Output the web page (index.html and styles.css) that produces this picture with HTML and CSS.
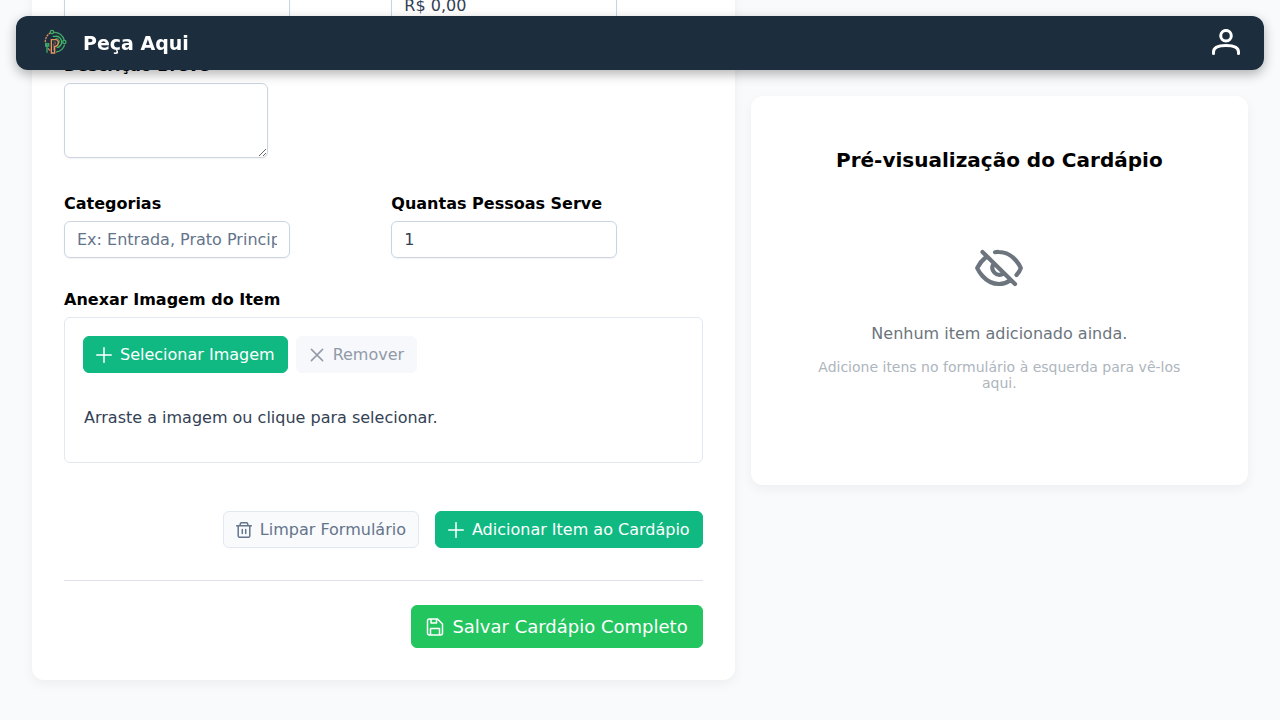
FILE: index.html
```html
<!DOCTYPE html>
<html lang="pt-BR">
<head>
<meta charset="utf-8">
<meta name="viewport" content="width=device-width, initial-scale=1">
<title>Peça Aqui</title>
<link rel="stylesheet" href="styles.css">
</head>
<body>
<header class="topbar">
  <a class="brand" href="#">
    <svg class="brand-logo" viewBox="12 15 96 96" fill="none" aria-hidden="true">
      <path d="M54 31A31 31 0 0 1 85 55M86 68A31 31 0 0 1 60 90" stroke="#45a56a" stroke-width="4"/>
      <path d="M44 32A31 31 0 0 0 28 62" stroke="#d98e5c" stroke-width="4" stroke-dasharray="7 2"/>
      <path d="M36 79L42 86" stroke="#d98e5c" stroke-width="4"/>
      <circle cx="48" cy="30" r="5" stroke="#3fae62" stroke-width="4"/>
      <circle cx="85" cy="60" r="5" stroke="#3fae62" stroke-width="4"/>
      <path d="M50 43H58A17 17 0 0 1 62 77" stroke="#43b665" stroke-width="4"/>
      <path d="M58 50A9 9 0 0 1 65 67" stroke="#2f9f5c" stroke-width="3"/>
      <path d="M29 63V72H38V63M33 62V92" stroke="#43a86b" stroke-width="4"/>
      <path d="M46 93V53H59Q67 53 67 62T58 73H56V93Z" stroke="#e8965a" stroke-width="4"/>
      <path d="M52 60H59V66H52V86" stroke="#b86f49" stroke-width="2"/>
    </svg>
    <span>Peça Aqui</span>
  </a>
  <button class="user-button" type="button" aria-label="Conta">
    <svg viewBox="0 0 28 28" fill="none" stroke="currentColor" stroke-width="3" stroke-linecap="round">
      <circle cx="14" cy="6.700" r="5.300"/>
      <path d="M1.500 24.500V23C1.500 18 7 16.500 14 16.500S26.500 18 26.500 23V24.500"/>
    </svg>
  </button>
</header>

<main class="page">
  <div class="column">
    <form class="card form-card">
      <div class="field-grid">
        <div class="field">
          <input class="text-input" type="text" aria-label="Nome do Item">
        </div>
        <div class="field">
          <input class="text-input" type="text" aria-label="Preço" value="R$ 0,00">
        </div>
      </div>
      <div class="field field-textarea">
        <label for="descricao">Descrição Breve</label>
        <textarea class="text-input" id="descricao"></textarea>
      </div>
      <div class="field-grid">
        <div class="field">
          <label for="categorias">Categorias</label>
          <input class="text-input" id="categorias" type="text" placeholder="Ex: Entrada, Prato Principal">
        </div>
        <div class="field">
          <label for="pessoas">Quantas Pessoas Serve</label>
          <input class="text-input" id="pessoas" type="text" value="1">
        </div>
      </div>
      <div class="field">
        <span class="field-title">Anexar Imagem do Item</span>
        <div class="upload">
          <div class="upload-buttons">
            <button class="button primary" type="button">
              <svg class="icon" viewBox="0 0 16 16" aria-hidden="true"><path d="M8 .7V15.300M.7 8H15.300"/></svg>
              Selecionar Imagem
            </button>
            <button class="button muted" type="button" disabled>
              <svg class="icon" viewBox="0 0 16 16" aria-hidden="true"><path d="M2.400 2.400L13.600 13.600M13.600 2.400L2.400 13.600"/></svg>
              Remover
            </button>
          </div>
          <p class="upload-hint">Arraste a imagem ou clique para selecionar.</p>
        </div>
      </div>
      <div class="actions">
        <button class="button outline" type="reset">
          <svg class="icon" viewBox="0 0 16 16" aria-hidden="true"><path d="M.7 3.800H15.300M2.200 3.800V13.700Q2.200 15.300 3.800 15.300H12.200Q13.800 15.300 13.800 13.700V3.800M4.200 3.800V2.300Q4.200 .7 5.800 .7H10.200Q11.800 .7 11.800 2.300V3.800M6.300 7.600V11.600M9.700 7.600V11.600"/></svg>
          Limpar Formulário
        </button>
        <button class="button primary" type="button">
          <svg class="icon" viewBox="0 0 16 16" aria-hidden="true"><path d="M8 .7V15.300M.7 8H15.300"/></svg>
          Adicionar Item ao Cardápio
        </button>
      </div>
      <div class="save-bar">
        <button class="button save" type="submit">
          <svg class="icon" viewBox="0 0 18 18" aria-hidden="true"><path d="M3 1H11.500L16.500 6V15Q16.500 17 14.500 17H3.500Q1.500 17 1.500 15V3Q1.500 1 3.500 1ZM5 1.300V5H10.500V1.300M4.500 16.700V10.500H13.500V16.700"/></svg>
          Salvar Cardápio Completo
        </button>
      </div>
    </form>
  </div>

  <aside class="column">
    <section class="card preview">
      <h2>Pré-visualização do Cardápio</h2>
      <div class="empty">
        <svg class="empty-icon" viewBox="0 0 48 48" fill="none" stroke="currentColor" stroke-width="4.200" stroke-linecap="round" stroke-linejoin="round" aria-hidden="true">
          <path d="M7.500 8L40 40M11 13C5.500 17.500 2.200 24 2.200 24S9 40 24 40Q30 40 35 36.500M20 8.200Q22 7.800 24 8C39 8 45.800 24 45.800 24Q44.500 27.800 41.500 31M18.200 20.500A7 7 0 0 0 27.500 30"/>
        </svg>
        <p class="empty-title">Nenhum item adicionado ainda.</p>
        <p class="empty-text">Adicione itens no formulário à esquerda para vê-los aqui.</p>
      </div>
    </section>
  </aside>
</main>
</body>
</html>
```
FILE: styles.css
```css
* {
  box-sizing: border-box;
}

body {
  margin: 0;
  overflow-x: hidden;
  background: #f8fafc;
  color: #000;
  font-family: "DejaVu Sans", sans-serif;
  font-size: 16px;
  line-height: 19px;
}

p,
h2 {
  margin: 0;
}

button,
input,
textarea {
  font: inherit;
}

.topbar {
  position: fixed;
  top: 16px;
  left: 16px;
  right: 16px;
  z-index: 10;
  display: flex;
  align-items: center;
  justify-content: space-between;
  height: 54px;
  padding: 0 24px;
  border-radius: 12px;
  background: #1c2d3e;
  box-shadow: 0 4px 12px rgba(0, 0, 0, 0.3);
}

.brand {
  display: flex;
  align-items: center;
  gap: 11px;
  color: #fff;
  font-size: 19px;
  font-weight: 700;
  text-decoration: none;
}

.brand-logo {
  width: 32px;
  height: 32px;
}

.user-button {
  display: flex;
  padding: 0;
  border: 0;
  background: none;
  color: #fff;
}

.user-button svg {
  width: 28px;
  height: 28px;
}

.page {
  display: grid;
  grid-template-columns: 7fr 5fr;
  padding: 0 24px 40px;
}

.column {
  min-width: 0;
  padding: 0 8px;
}

.card {
  padding: 32px;
  border-radius: 12px;
  background: #fff;
  box-shadow: 0 4px 12px rgba(0, 0, 0, 0.05);
}

.form-card {
  display: flex;
  flex-direction: column;
  gap: 32px;
  margin-top: -45px;
}

.field-grid {
  display: grid;
  grid-template-columns: 1fr 1fr;
  gap: 16px;
}

.field {
  display: flex;
  flex-direction: column;
  align-items: flex-start;
  gap: 8px;
}

.field-textarea {
  padding-bottom: 4px;
}

.field label,
.field-title {
  font-weight: 700;
}

.text-input {
  width: 226px;
  max-width: 100%;
  height: 37px;
  padding: 8px 12px;
  border: 1px solid #cbd5e1;
  border-radius: 6px;
  outline: 0;
  background: #fff;
  box-shadow: 0 1px 2px rgba(18, 18, 23, 0.05);
  color: #334155;
}

.text-input::placeholder {
  color: #64748b;
}

textarea.text-input {
  width: 204px;
  height: 75px;
}

.upload {
  align-self: stretch;
  border: 1px solid #e2e8f0;
  border-radius: 6px;
  color: #334155;
}

.upload-buttons {
  display: flex;
  flex-wrap: wrap;
  gap: 8px;
  padding: 18px;
}

.upload-hint {
  padding: 17px 19px 35px;
}

.button {
  display: flex;
  align-items: center;
  gap: 8px;
  padding: 8px 12px;
  border: 1px solid transparent;
  border-radius: 6px;
  color: #fff;
}

.primary {
  border-color: #10b981;
  background: #10b981;
}

.muted {
  border-color: #f6f8fc;
  background: #f6f8fc;
  color: #929aa7;
}

.outline {
  border-color: #e2e8f0;
  background: #f8fafc;
  color: #64748b;
}

.icon {
  width: 16px;
  height: 16px;
  fill: none;
  stroke: currentColor;
  stroke-width: 1.5;
  stroke-linecap: round;
  stroke-linejoin: round;
}

.actions {
  display: flex;
  flex-wrap: wrap;
  justify-content: flex-end;
  gap: 16px;
  padding-top: 16px;
}

.save-bar {
  display: flex;
  justify-content: flex-end;
  padding-top: 24px;
  border-top: 1px solid #dee2e6;
}

.save {
  padding: 10px 14px;
  background: #22c55e;
  border-color: #22c55e;
  font-size: 18px;
  line-height: 21px;
}

.save .icon {
  width: 18px;
  height: 18px;
}

.preview {
  position: sticky;
  top: 96px;
  margin-top: 96px;
  padding: 52px 32px 70px;
  text-align: center;
}

.preview h2 {
  font-size: 20px;
  line-height: 24px;
}

.empty {
  padding: 72px 24px 24px;
  color: #6c757d;
}

.empty-icon {
  display: block;
  width: 48px;
  height: 48px;
  margin: 0 auto 32px;
}

.empty-text {
  margin-top: 16px;
  color: #adb5bd;
  font-size: 14px;
  line-height: 16px;
}
```
